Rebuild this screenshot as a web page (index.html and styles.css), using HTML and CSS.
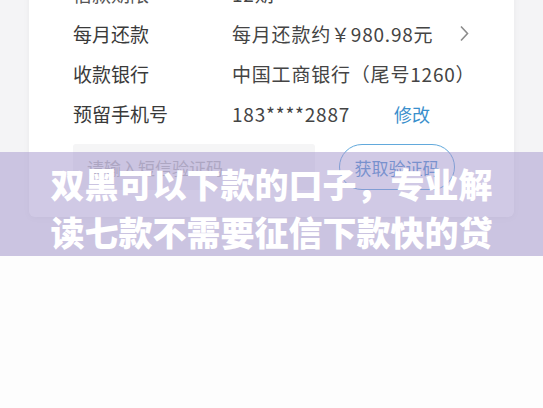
FILE: index.html
```html
<!DOCTYPE html>
<html lang="zh-CN">
<head>
    <meta charset="UTF-8">
    <meta name="viewport" content="width=device-width, initial-scale=1.0">
    <title>双黑可以下款的口子</title>
    <link rel="stylesheet" href="styles.css">
</head>
<body>
    <!-- Cover picture: loan confirmation screen -->
    <div class="cover">
        <div class="loan-card">
            <div class="row row-cut">
                <span class="label">借款期限</span>
                <span class="value">12期</span>
            </div>
            <div class="row">
                <span class="label">每月还款</span>
                <span class="value">每月还款约￥980.98元</span>
                <svg class="chevron" width="10" height="17" viewBox="0 0 10 17">
                    <path d="M2 1.5 L8.5 8.5 L2 15.5" fill="none" stroke="#8c8c8c" stroke-width="1.6"/>
                </svg>
            </div>
            <div class="row">
                <span class="label">收款银行</span>
                <span class="value">中国工商银行（尾号1260）</span>
            </div>
            <div class="row">
                <span class="label">预留手机号</span>
                <span class="value">183****2887<a class="edit-link" href="#">修改</a></span>
            </div>
            <div class="code-row">
                <div class="code-input">请输入短信验证码</div>
                <button class="code-button">获取验证码</button>
            </div>
        </div>

        <!-- Title band over the picture -->
        <div class="cover-title">
            <h1>双黑可以下款的口子，专业解读七款不需要征信下款快的贷款平台</h1>
        </div>
    </div>

    <div class="page-body"></div>
</body>
</html>
```

FILE: styles.css
```css
/* General Reset */
* {
    margin: 0;
    padding: 0;
    box-sizing: border-box;
}

body {
    font-family: "Noto Sans CJK SC", "Noto Sans", sans-serif;
    background-color: #fdfdfd;
    color: #3a3a3a;
}

.cover {
    position: relative;
    height: 256px;
    overflow: hidden;
    background-color: #f4f4f6;
}

.loan-card {
    margin: -27px 29px 0;
    padding: 0 45px 27px 44px;
    background: #ffffff;
    border-radius: 6px;
    box-shadow: 0 1px 6px rgba(0, 0, 0, 0.05);
}

.row {
    display: flex;
    align-items: center;
    height: 40px;
    font-size: 19px;
}

.row-cut {
    color: #555;
}

.label {
    width: 159px;
    flex-shrink: 0;
}

.value {
    flex: 1;
    color: #444;
    letter-spacing: 0.8px;
    white-space: nowrap;
}

.chevron {
    flex-shrink: 0;
}

.edit-link {
    margin-left: 44px;
    color: #3a8fcc;
    text-decoration: none;
    font-size: 18px;
    letter-spacing: 0;
}

.code-row {
    display: flex;
    align-items: center;
    gap: 24px;
    margin-top: 11px;
}

.code-input {
    width: 242px;
    height: 46px;
    padding-left: 14px;
    display: flex;
    align-items: center;
    background: #f5f5f6;
    border-radius: 3px;
    color: #b9b9b9;
    font-size: 17px;
}

.code-button {
    width: 116px;
    height: 46px;
    border: 1.5px solid #62a9dc;
    border-radius: 23px;
    background: #ffffff;
    color: #4f8fcf;
    font-family: inherit;
    font-size: 17px;
}

.cover-title {
    position: absolute;
    left: 0;
    right: 0;
    bottom: 0;
    height: 104px;
    padding-top: 8px;
    overflow: hidden;
    background: rgba(162, 148, 204, 0.5);
}

.cover-title h1 {
    width: 444px;
    margin: 0 auto;
    color: #ffffff;
    font-size: 34px;
    font-weight: 900;
    line-height: 48px;
    text-align: center;
}

.page-body {
    height: 152px;
    background-color: #fdfdfd;
}
```
